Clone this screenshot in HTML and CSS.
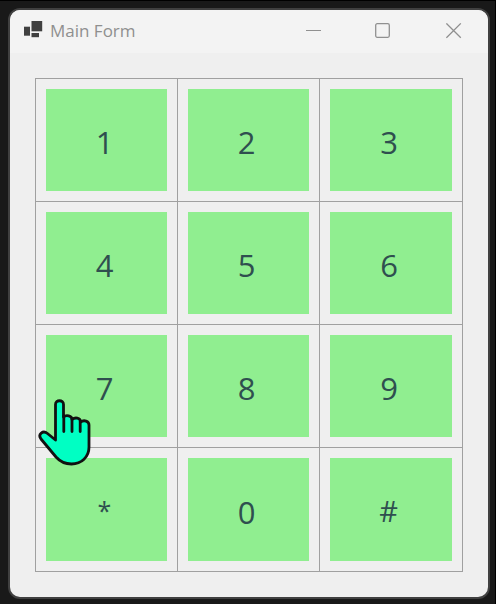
FILE: index.html
```html
<!DOCTYPE html>
<html lang="en">
<head>
<meta charset="utf-8">
<title>Main Form</title>
<link rel="stylesheet" href="styles.css">
</head>
<body>
<main class="window">
  <header class="titlebar">
    <svg class="app-icon" width="20" height="19" viewBox="0 0 20 19">
      <rect x="0" y="6.7" width="6" height="9"/>
      <rect x="7.5" y="1" width="10.7" height="10.3"/>
      <rect x="7.5" y="13" width="7.5" height="4.2"/>
    </svg>
    <h1 class="title">Main Form</h1>
    <div class="controls">
      <svg class="minimize" width="16" height="16" viewBox="0 0 16 16"><path d="M1 7.5H16"/></svg>
      <svg width="16" height="16" viewBox="0 0 16 16"><rect x=".7" y=".7" width="13.6" height="13.6" rx="1.5"/></svg>
      <svg width="16" height="16" viewBox="0 0 16 16"><path d="M.4.4 14.8 14.8M14.8.4.4 14.8"/></svg>
    </div>
  </header>
  <section class="keypad">
    <div class="cell"><button class="key">1</button></div>
    <div class="cell"><button class="key">2</button></div>
    <div class="cell"><button class="key">3</button></div>
    <div class="cell"><button class="key">4</button></div>
    <div class="cell"><button class="key">5</button></div>
    <div class="cell"><button class="key">6</button></div>
    <div class="cell"><button class="key">7</button></div>
    <div class="cell"><button class="key">8</button></div>
    <div class="cell"><button class="key">9</button></div>
    <div class="cell"><button class="key star">*</button></div>
    <div class="cell"><button class="key">0</button></div>
    <div class="cell"><button class="key hash">#</button></div>
  </section>
</main>
<svg class="pointer" width="54" height="68" viewBox="0 0 54 68">
  <path d="M17.5 39V5.5C17.5 .5 25.5 .5 25.5 5.5V18C28 15.5 34 16.5 34 20.5C37 18 42.500 18.500 42.500 23C46 20.500 51 22 51 26V48C51 58 43.500 65 33.500 65C27 65 22 62.500 18 58L3 40C-.5 35 5 31 9.500 34.500L17.500 41Z"/>
  <path d="M25.800 17V32.500M34 20V32.500M42.200 22.500V32.500"/>
</svg>
</body>
</html>
```
FILE: styles.css
```css
* {
  box-sizing: border-box;
}

body {
  margin: 0;
  width: 496px;
  height: 604px;
  padding: 7px 5px 5px 8px;
  overflow: hidden;
  background: #191919;
  border-top: 1px solid #000;
  border-right: 1px solid #000;
  font-family: "Open Sans", "Noto Sans", sans-serif;
}

.window {
  width: 482px;
  height: 591px;
  border: 2px solid #404040;
  border-radius: 12px;
  background: #efefef;
  overflow: hidden;
}

.titlebar {
  display: flex;
  align-items: flex-start;
  height: 43px;
  padding: 10px 26px 0 14px;
  background: #f3f3f3;
}

.app-icon {
  fill: #404040;
}

.title {
  margin: 0 0 0 6px;
  font-size: 17px;
  line-height: 22px;
  font-weight: 400;
  color: #8f8f8f;
}

.controls {
  display: flex;
  gap: 55px;
  margin: 3px 0 0 auto;
  fill: none;
  stroke: #909090;
  stroke-width: 1.3;
}

.minimize {
  margin-right: -1px;
  stroke-width: 1;
}

.keypad {
  display: grid;
  grid-template-columns: 141px 141px 142px;
  grid-template-rows: 122px 122px 122px 123px;
  gap: 1px;
  width: 428px;
  margin: 25px 0 0 25px;
  padding: 1px;
  background: #a0a0a0;
}

.cell {
  display: flex;
  padding: 10px;
  background: #efefef;
}

.key {
  flex: 1;
  border: 0;
  padding: 4px 4px 0 0;
  background: #90ee90;
  color: #2f4f4f;
  font: 400 31px/44px "Open Sans", "Noto Sans", sans-serif;
}

.star {
  padding-top: 1px;
  font-size: 25px;
}

.hash {
  padding: 2px 5px 0 0;
  font-size: 29px;
}

.pointer {
  position: absolute;
  left: 38px;
  top: 399px;
  fill: #00ffc3;
  stroke: #111;
  stroke-width: 2.8;
  stroke-linejoin: round;
  stroke-linecap: round;
}
```
